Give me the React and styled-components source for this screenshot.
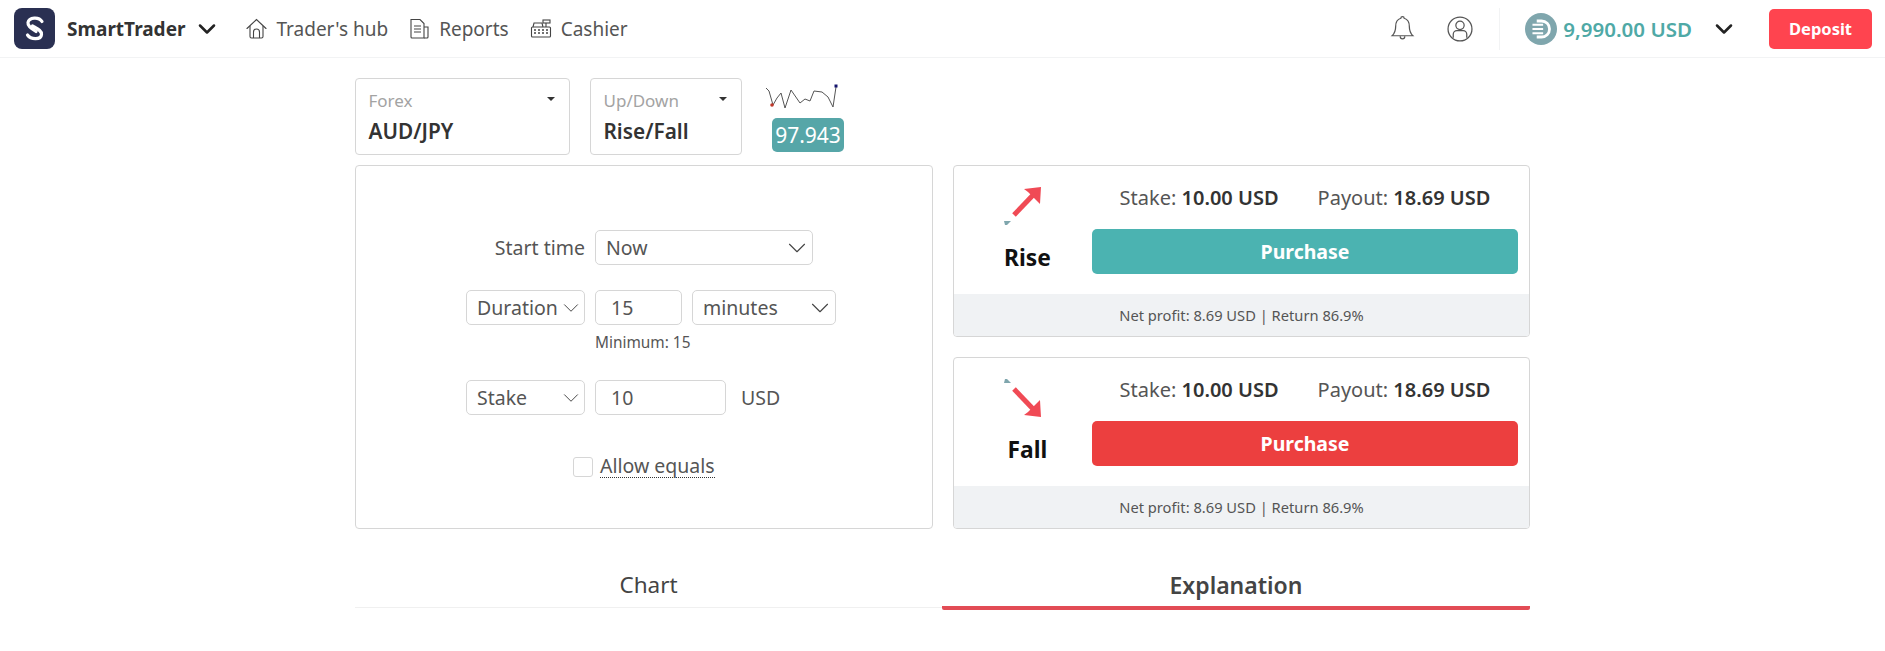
import React from "react";
import styled, { createGlobalStyle } from "styled-components";
import { ChevronDown } from "lucide-react";

const GlobalStyle = createGlobalStyle`
  body {
    margin: 0;
    background: #fff;
    color: #333;
    font-family: "Noto Sans", Roboto, sans-serif;
  }
  * { box-sizing: border-box; }
`;

const Header = styled.header`
  height: 58px;
  display: flex;
  align-items: center;
  justify-content: space-between;
  padding: 0 13px 0 14px;
  border-bottom: 1px solid #f2f3f4;
`;

const HeaderSide = styled.div`
  display: flex;
  align-items: center;
  height: 100%;
`;

const Brand = styled.div`
  display: flex;
  align-items: center;
  font-size: 19px;
  font-weight: 700;
  color: #333;
  margin-right: 25px;

  svg.logo { margin-right: 12px; }
  svg.chev { margin-left: 8px; }
`;

const NavItem = styled.a`
  display: flex;
  align-items: center;
  gap: 9px;
  font-size: 19px;
  color: #555;
  margin-right: 21px;
`;

const IconButton = styled.div`
  display: flex;
  margin-right: ${(p) => p.$gap}px;
`;

const Balance = styled.div`
  display: flex;
  align-items: center;
  height: 42px;
  padding-left: 25px;
  border-left: 1px solid #f2f3f4;
  font-size: 20.5px;
  font-weight: 600;
  color: #4fa9a6;
  gap: 6px;
  svg.chev { margin-left: 12px; }
`;

const DepositButton = styled.button`
  margin-left: 31px;
  width: 103px;
  height: 40px;
  border: 0;
  border-radius: 5px;
  background: #ff444f;
  color: #fff;
  font: 700 16.5px "Noto Sans", Roboto, sans-serif;
`;

const Main = styled.main`
  width: 1175px;
  margin: 0 auto;
  padding-top: 20px;
`;

const MarketRow = styled.div`
  display: flex;
  align-items: flex-start;
  height: 77px;
  margin-bottom: 10px;
`;

const MarketPicker = styled.div`
  position: relative;
  width: ${(p) => p.$width}px;
  height: 77px;
  margin-right: 20px;
  padding: 11px 12.5px;
  border: 1px solid #d6d6d6;
  border-radius: 4px;

  &:after {
    content: "";
    position: absolute;
    top: 18px;
    right: 14px;
    border-left: 4px solid transparent;
    border-right: 4px solid transparent;
    border-top: 4px solid #333;
  }
`;

const PickerLabel = styled.div`
  font-size: 17px;
  line-height: 22px;
  color: #a3a3a3;
`;

const PickerValue = styled.div`
  font-size: 20.8px;
  line-height: 26px;
  margin-top: 6px;
  font-weight: 600;
  color: #333;
`;

const Ticker = styled.div`
  display: flex;
  flex-direction: column;
  align-items: flex-start;
  margin-left: 3px;
`;

const Spark = styled.svg`
  display: block;
  margin-top: 6px;
`;

const PriceBadge = styled.div`
  margin: 4px 0 0 7px;
  width: 72px;
  height: 34px;
  border-radius: 5px;
  background: #56a6a8;
  color: #fff;
  font-size: 21px;
  line-height: 34px;
  text-align: center;
`;

const TradeGrid = styled.div`
  display: grid;
  grid-template-columns: 578px 577px;
  column-gap: 20px;
`;

const Panel = styled.section`
  height: 364px;
  padding: 64px 0 0 110px;
  border: 1px solid #d6d6d6;
  border-radius: 4px;
`;

const FormRow = styled.div`
  display: flex;
  align-items: center;
  gap: 10px;
  margin-bottom: ${(p) => p.$after}px;
  font-size: 19.5px;
  color: #555;
`;

const FieldLabel = styled.div`
  width: 119px;
  text-align: right;
`;

const SelectBox = styled.div`
  position: relative;
  width: ${(p) => p.$width}px;
  height: 35px;
`;

const Select = styled.select`
  appearance: none;
  width: 100%;
  height: 100%;
  padding: 0 0 0 10px;
  border: 1px solid #d6d6d6;
  border-radius: 5px;
  background: #fff;
  color: #555;
  font: 19.5px "Noto Sans", Roboto, sans-serif;
`;

const SelectArrow = styled(ChevronDown)`
  position: absolute;
  top: 50%;
  right: 1px;
  transform: translateY(-50%);
  color: #444;
  pointer-events: none;
`;

const TextInput = styled.input`
  width: ${(p) => p.$width}px;
  height: 35px;
  padding: 0 0 0 15px;
  border: 1px solid #d6d6d6;
  border-radius: 5px;
  color: #555;
  font: 19.5px "Noto Sans", Roboto, sans-serif;
`;

const Unit = styled.span`
  margin-left: 5px;
`;

const Hint = styled.div`
  margin: 8px 0 27px 129px;
  font-size: 15.4px;
  line-height: 20px;
  color: #555;
`;

const CheckRow = styled.label`
  display: flex;
  align-items: center;
  gap: 7px;
  margin-left: 107px;
  font-size: 19.5px;
  color: #555;
`;

const CheckBox = styled.span`
  width: 20px;
  height: 20px;
  border: 1px solid #d6d6d6;
  border-radius: 3px;
`;

const Dotted = styled.span`
  line-height: 22px;
  border-bottom: 1px dotted #333;
`;

const CardStack = styled.div`
  display: flex;
  flex-direction: column;
  gap: 20px;
`;

const Card = styled.article`
  height: 172px;
  display: flex;
  flex-direction: column;
  border: 1px solid #d6d6d6;
  border-radius: 4px;
  overflow: hidden;
`;

const CardBody = styled.div`
  flex: 1;
  display: flex;
  padding: 13px 11px 0 0;
`;

const CardSide = styled.div`
  width: 138px;
  padding-left: 9px;
  display: flex;
  flex-direction: column;
  align-items: center;
  font-size: 22.8px;
  font-weight: 700;
  color: #111;
  line-height: 30px;
`;

const CardMain = styled.div`
  flex: 1;
`;

const Terms = styled.div`
  display: flex;
  justify-content: center;
  gap: 39px;
  height: 40px;
  line-height: 38px;
  font-size: 20px;
  color: #555;
  b { font-weight: 600; color: #333; }
`;

const PurchaseButton = styled.button`
  display: block;
  width: 100%;
  height: 45px;
  margin-top: 10px;
  border: 0;
  border-radius: 5px;
  background: ${(p) => p.$color};
  color: #fff;
  font: 700 19.5px "Noto Sans", Roboto, sans-serif;
`;

const CardFooter = styled.div`
  height: 42px;
  background: #f0f2f4;
  font-size: 14.7px;
  line-height: 42px;
  text-align: center;
  color: #555;
`;

const Tabs = styled.div`
  display: grid;
  grid-template-columns: 587px 588px;
  align-items: start;
  margin-top: 37px;
`;

const Tab = styled.div`
  height: ${(p) => (p.$active ? 44 : 42)}px;
  text-align: center;
  font-size: ${(p) => (p.$active ? 23 : 22.5)}px;
  line-height: 38px;
  font-weight: ${(p) => (p.$active ? 600 : 400)};
  color: #444;
  border-bottom: ${(p) => (p.$active ? "4px solid #e24c55" : "1px solid #f0f0f0")};
  border-radius: ${(p) => (p.$active ? "0 0 2px 2px" : "0")};
`;

const ArrowSvg = styled.svg`
  margin: 7px 10px 17px 0;
  transform: scaleY(${(p) => (p.$down ? -1 : 1)});
`;

const Logo = () => (
  <svg className="logo" width="41" height="41" viewBox="0 0 41 41">
    <rect width="41" height="41" rx="8" fill="#2a3052" />
    <path d="M28 13.5 C25 8.5 15 9 14 14.5 C13.5 18 17 20 22 23.5" fill="none" stroke="#fff" strokeWidth="3.2" strokeLinecap="round" />
    <path d="M18.5 18 C23 20.5 28 22.5 27.5 26.5 C27 32 17 32 13.5 27" fill="none" stroke="#fff" strokeWidth="3.2" strokeLinecap="round" />
  </svg>
);

const HouseIcon = () => (
  <svg width="21" height="21" viewBox="0 0 21 21" fill="none" stroke="#444" strokeWidth="1.1">
    <path d="M1 10.5 10.5 1.5 20 10.5" strokeLinecap="round" />
    <path d="M4 8v10.5a1.5 1.5 0 0 0 1.5 1.5h10a1.5 1.5 0 0 0 1.5-1.5V8" />
    <path d="M7.5 20v-6a3 3 0 0 1 6 0v6" />
  </svg>
);

const ReportIcon = () => (
  <svg width="21" height="21" viewBox="0 0 21 21" fill="none" stroke="#444" strokeWidth="1.1">
    <path d="M2 1.5h9l4 4V20H3a1 1 0 0 1-1-1z" />
    <path d="M15 9h4v10a1 1 0 0 1-1 1h-3" />
    <path d="M5 8h7M5 11h7M5 14h7" />
  </svg>
);

const CashierIcon = () => (
  <svg width="22" height="21" viewBox="0 0 22 21" fill="none" stroke="#444" strokeWidth="1.1">
    <rect x="1.5" y="9" width="19" height="10" rx="1" />
    <path d="M3 9l1-4h8l1 4" />
    <rect x="13" y="2" width="7" height="3" />
    <path d="M16 5v4" />
    <path d="M4 12h2M8 12h2M12 12h2M16 12h2M4 15h2M8 15h2M12 15h2M16 15h2" strokeWidth="1.4" />
  </svg>
);

const BellIcon = () => (
  <svg width="25" height="29" viewBox="0 0 24 28" fill="none" stroke="#555" strokeWidth="1.2">
    <path d="M12 2.5c1 0 1.6.7 1.6 1.6 3.6 1 5 4 5 7.9 0 5 1.4 7 3.4 9H2c2-2 3.4-4 3.4-9 0-3.9 1.4-6.9 5-7.9 0-.9.6-1.6 1.6-1.6z" />
    <path d="M9.8 21.5c0 3.4 4.4 3.4 4.4 0" />
  </svg>
);

const UserIcon = () => (
  <svg width="26" height="26" viewBox="0 0 25 25" fill="none" stroke="#555" strokeWidth="1.2">
    <circle cx="12.5" cy="12.5" r="11.5" />
    <circle cx="12.5" cy="9" r="4" />
    <path d="M6 21v-3.5a3.5 3.5 0 0 1 3.5-3.5h6a3.5 3.5 0 0 1 3.5 3.5V21" />
  </svg>
);

const CoinIcon = () => (
  <svg width="32" height="32" viewBox="0 0 30 30">
    <circle cx="15" cy="15" r="15" fill="#7fa6ad" />
    <path d="M11 7.5h4.5a7.5 7.5 0 0 1 0 15H11" fill="none" stroke="#fff" strokeWidth="2.6" />
    <path d="M7 11h10M7 15h10M7 19h10" stroke="#fff" strokeWidth="1.8" />
  </svg>
);

const Sparkline = () => (
  <Spark width="84" height="30" viewBox="0 0 84 30">
    <polyline
      points="1,4 4,7 8,21 12,14 16,9 20,24 26,6 35,19 40,15 45,17 49,7 57,8 63,13 68,23 71,3"
      fill="none"
      stroke="#555"
      strokeWidth="1"
    />
    <circle cx="7" cy="21" r="1.8" fill="#c0392b" />
    <rect x="69.5" y="0.5" width="3" height="3" fill="#14146e" />
  </Spark>
);

const TradeArrow = ({ down }) => (
  <ArrowSvg $down={down} width="38" height="40" viewBox="0 0 38 40">
    <path d="M0 35h7l-4 4H1z" fill="#7fa6ad" />
    <path d="M10 29 31 7" stroke="#f04a55" strokeWidth="5" fill="none" />
    <path d="M20 3 37 1 36 18 32 14 24 6z" fill="#f04a55" />
  </ArrowSvg>
);

const Chevron = ({ size }) => (
  <ChevronDown className="chev" size={size} strokeWidth={2.2} color="#222" />
);

const FormSelect = ({ width, value, arrow = 30 }) => (
  <SelectBox $width={width}>
    <Select defaultValue={value}>
      <option>{value}</option>
    </Select>
    <SelectArrow size={arrow} strokeWidth={0.9} />
  </SelectBox>
);

const TradeCard = ({ name, color, down }) => (
  <Card>
    <CardBody>
      <CardSide>
        <TradeArrow down={down} />
        {name}
      </CardSide>
      <CardMain>
        <Terms>
          <span>
            Stake: <b>10.00 USD</b>
          </span>
          <span>
            Payout: <b>18.69 USD</b>
          </span>
        </Terms>
        <PurchaseButton $color={color}>Purchase</PurchaseButton>
      </CardMain>
    </CardBody>
    <CardFooter>Net profit: 8.69 USD | Return 86.9%</CardFooter>
  </Card>
);

export default function App() {
  return (
    <>
      <GlobalStyle />
      <Header>
        <HeaderSide>
          <Brand>
            <Logo />
            SmartTrader
            <Chevron size={28} />
          </Brand>
          <NavItem>
            <HouseIcon />
            Trader's hub
          </NavItem>
          <NavItem>
            <ReportIcon />
            Reports
          </NavItem>
          <NavItem>
            <CashierIcon />
            Cashier
          </NavItem>
        </HeaderSide>
        <HeaderSide>
          <IconButton $gap={32}>
            <BellIcon />
          </IconButton>
          <IconButton $gap={26}>
            <UserIcon />
          </IconButton>
          <Balance>
            <CoinIcon />
            9,990.00 USD
            <Chevron size={28} />
          </Balance>
          <DepositButton>Deposit</DepositButton>
        </HeaderSide>
      </Header>
      <Main>
        <MarketRow>
          <MarketPicker $width={215}>
            <PickerLabel>Forex</PickerLabel>
            <PickerValue>AUD/JPY</PickerValue>
          </MarketPicker>
          <MarketPicker $width={152}>
            <PickerLabel>Up/Down</PickerLabel>
            <PickerValue>Rise/Fall</PickerValue>
          </MarketPicker>
          <Ticker>
            <Sparkline />
            <PriceBadge>97.943</PriceBadge>
          </Ticker>
        </MarketRow>
        <TradeGrid>
          <Panel>
            <FormRow $after={25}>
              <FieldLabel>Start time</FieldLabel>
              <FormSelect width={218} value="Now" />
            </FormRow>
            <FormRow $after={0}>
              <FormSelect width={119} value="Duration" arrow={26} />
              <TextInput $width={87} defaultValue="15" />
              <FormSelect width={144} value="minutes" />
            </FormRow>
            <Hint>Minimum: 15</Hint>
            <FormRow $after={40}>
              <FormSelect width={119} value="Stake" arrow={26} />
              <TextInput $width={131} defaultValue="10" />
              <Unit>USD</Unit>
            </FormRow>
            <CheckRow>
              <CheckBox />
              <Dotted>Allow equals</Dotted>
            </CheckRow>
          </Panel>
          <CardStack>
            <TradeCard name="Rise" color="#4bb3b1" />
            <TradeCard name="Fall" color="#ec3f3f" down />
          </CardStack>
        </TradeGrid>
        <Tabs>
          <Tab>Chart</Tab>
          <Tab $active>Explanation</Tab>
        </Tabs>
      </Main>
    </>
  );
}
